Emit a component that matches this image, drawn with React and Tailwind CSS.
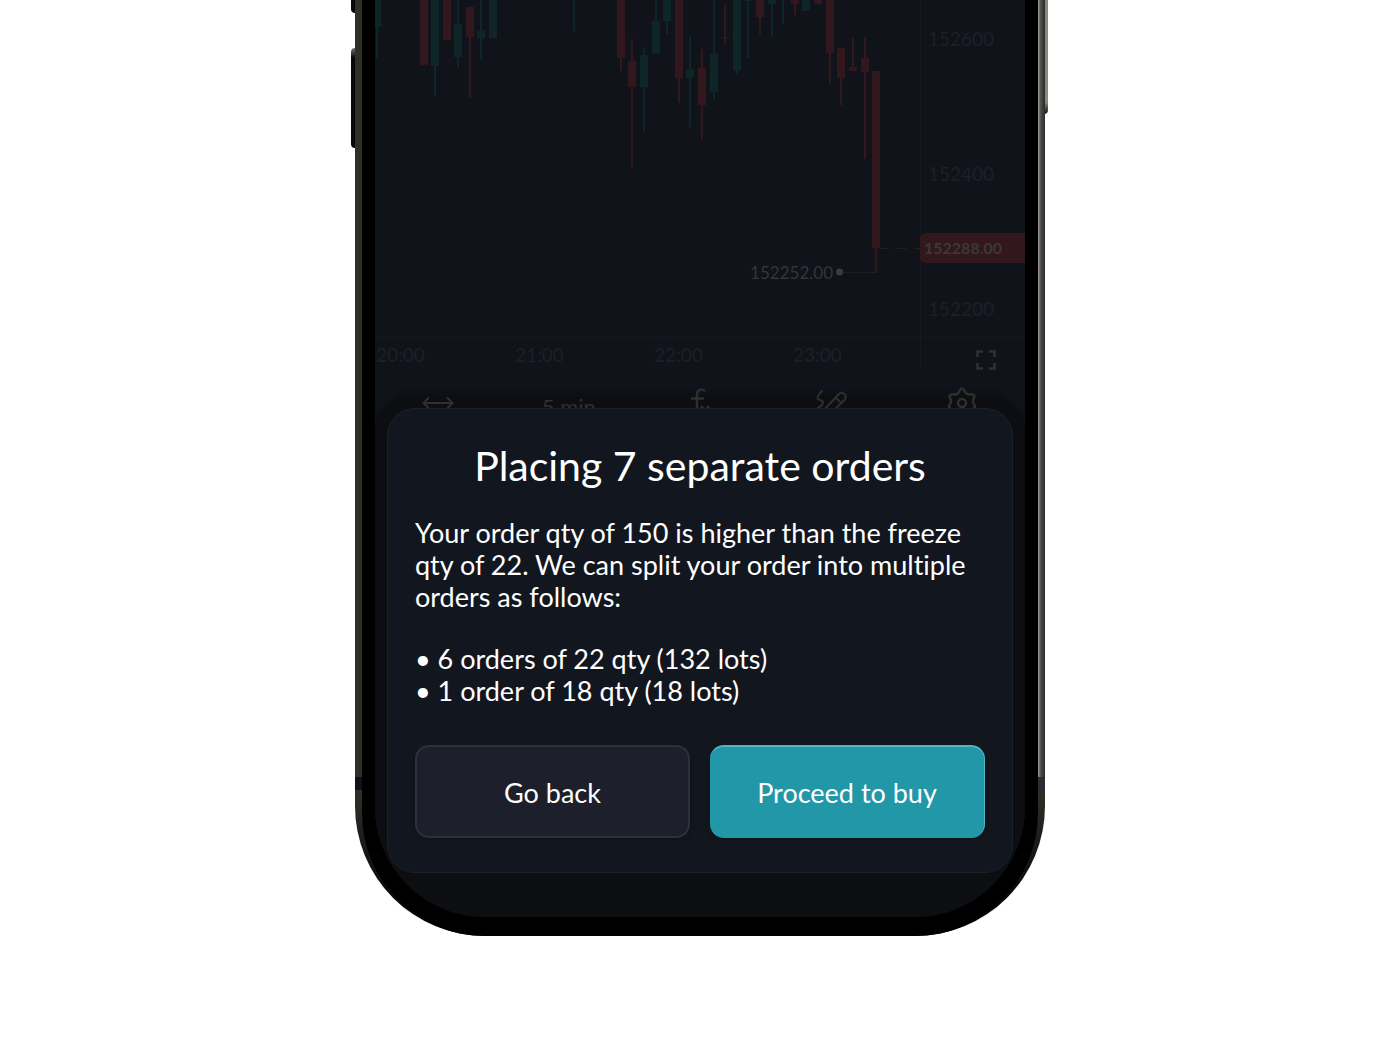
const CANDLES = [
  // [x, open/close top, open/close bottom, high, low, up]
  [2, 0, 27, 0, 59, true],
  [49, 0, 65, 0, 65, false],
  [60, 0, 66, 0, 96, true],
  [72, 0, 40, 0, 40, false],
  [83, 24, 57, 0, 68, true],
  [95, 7, 37, 7, 98, false],
  [106, 31, 38, 0, 60, true],
  [118, 0, 38, 0, 38, true],
  [199, 0, 0, 0, 31, true],
  [246, 0, 58, 0, 71, false],
  [257, 61, 87, 39, 167, false],
  [269, 55, 87, 47, 132, true],
  [281, 21, 54, 0, 54, true],
  [292, 0, 21, 0, 34, true],
  [304, 0, 78, 0, 103, false],
  [315, 69, 78, 37, 127, true],
  [327, 68, 105, 49, 139, false],
  [339, 54, 92, 0, 100, true],
  [350, 37, 38, 5, 44, false],
  [362, 0, 71, 0, 75, true],
  [373, 0, 1, 0, 58, true],
  [385, 0, 17, 0, 34, false],
  [397, 0, 4, 0, 37, true],
  [408, 0, 0, 0, 24, true],
  [420, 0, 4, 0, 15, false],
  [431, 0, 11, 0, 11, true],
  [443, 0, 4, 0, 4, false],
  [455, 0, 53, 0, 84, false],
  [466, 48, 78, 48, 105, false],
  [478, 67, 71, 38, 71, false],
  [490, 58, 72, 37, 159, false],
  [501, 71, 248, 71, 273, false],
];

const PRICES = ['152600', '152400', '152200'];
const TIMES = ['20:00', '21:00', '22:00', '23:00'];

function Chart() {
  return (
    <svg width="545" height="337" viewBox="0 0 545 337" className="block shrink-0" aria-label="Price chart">
      {CANDLES.map(([x, top, bottom, high, low, up]) => (
        <g key={x} fill={up ? '#0f2628' : '#32171d'}>
          <rect x={x - 1} y={high} width="2" height={low - high} />
          <rect x={x - 4} y={top} width="8" height={bottom - top} />
        </g>
      ))}
      <path d="M505 248.500H545" stroke="#2a1c1d" strokeDasharray="9 8" />
      <path d="M465 272.500H501" stroke="#1b1e25" />
      <circle cx="464.500" cy="272" r="3.500" fill="#3a3c40" />
      <text x="458" y="279" textAnchor="end" fontSize="17" fill="#33363a">152252.00</text>
    </svg>
  );
}

function Toolbar() {
  return (
    <div className="relative z-10 -mx-[3px] flex items-start text-[#2f2f2e]">
      <button aria-label="Range" className="flex flex-1 justify-center pt-[9px]">
        <svg width="32" height="20" viewBox="0 0 32 20" fill="none" stroke="currentColor" strokeWidth="2">
          <path d="M1.500 10H30.500M7 4.500L1.500 10L7 15.500M25 4.500L30.500 10L25 15.500" />
        </svg>
      </button>
      <button className="flex-1 pt-[11px] text-[22px] leading-6">5 min</button>
      <button aria-label="Indicators" className="flex flex-1 justify-center">
        <svg width="24" height="36" viewBox="0 0 24 36" fill="none" stroke="currentColor" strokeWidth="2.500">
          <path d="M17 7C13 4 9 6 9 11V29M3 14.500H16M13 22L21 31M21 22L13 31" />
        </svg>
      </button>
      <button aria-label="Draw" className="flex flex-1 justify-center pt-1">
        <svg width="34" height="34" viewBox="0 0 34 34" fill="none" stroke="currentColor" strokeWidth="2">
          <path d="M8.500 2.500Q3 8 3.500 10.500C4 12.500 9 11.500 9 14.500Q8.500 18 3.500 20" />
          <path d="M9 23L24.500 6.500Q27.500 3.500 30.500 6Q33 9 30.500 12L14 28L8 29ZM21.500 9.500L27.500 15" />
        </svg>
      </button>
      <button aria-label="Settings" className="flex flex-1 justify-center">
        <svg width="30" height="36" viewBox="0 0 30 36" fill="none" stroke="currentColor" strokeWidth="2.500" strokeLinejoin="round">
          <path d="M15 4.500Q17 5 18 7.500Q19.500 11 22.500 10.500Q27.500 9.500 27.500 13Q25.500 16 26 18Q26.500 20 28 22Q28.500 25 25 25Q23 26 23 29Q22 32.500 19 31Q15 28.500 11 31Q8 32.500 7 29Q7 26 5 25Q1.500 25 2 22Q3.500 20 4 18Q4.500 16 2.500 13Q2.500 9.500 7.500 10.500Q10.500 11 12 7.500Q13 5 15 4.500Z" />
          <circle cx="15" cy="19" r="4" />
        </svg>
      </button>
    </div>
  );
}

function OrderDialog() {
  return (
    <div
      role="dialog"
      aria-labelledby="dialog-title"
      className="absolute inset-x-3 bottom-11 z-20 rounded-[28px] border border-[#1b222d] bg-[#12171f] px-[27px] py-[34px] text-white [font-variant-ligatures:none]"
    >
      <h1 id="dialog-title" className="text-center text-[41px] leading-[46px]">
        Placing 7 separate orders
      </h1>
      <p className="mt-7 text-[27px] leading-8">
        Your order qty of 150 is higher than the freeze qty of 22. We can split your order into multiple orders as follows:
      </p>
      <ul className="mt-[30px] text-[27px] leading-8">
        <li>• 6 orders of 22 qty (132 lots)</li>
        <li>• 1 order of 18 qty (18 lots)</li>
      </ul>
      <div className="mt-[38px] grid grid-cols-2 gap-5 text-[27px]">
        <button className="h-[93px] rounded-[14px] border-2 border-[#2d3036] bg-[#1d202a] pt-1 shadow-md">Go back</button>
        <button className="h-[93px] rounded-[14px] border-t-2 border-r border-[#50b5c5] bg-[#2297a8] pt-[2px] shadow-md">
          Proceed to buy
        </button>
      </div>
    </div>
  );
}

export default function App() {
  return (
    <main className="flex min-h-screen items-start justify-center bg-white font-['Lato',sans-serif]">
      <div className="relative w-full max-w-[690px]">
        {/* side keys */}
        <div className="absolute top-0 -left-1 h-[13px] w-[5px] rounded-bl bg-[#080808]" />
        <div className="absolute top-12 -left-1 h-[100px] w-[5px] rounded-l bg-linear-to-b from-[#777777] to-[#080808] to-10%" />
        <div className="absolute top-0 -right-[3px] h-[114px] w-1 rounded-br bg-linear-to-b from-[#8b8681] from-90% to-[#1c1416]" />

        <div className="relative rounded-b-[130px] bg-linear-to-b from-[#2f2e29] from-85% to-[#0c0a0b] to-95% px-[7px]">
          {/* metal edge and antenna bands */}
          <div className="absolute top-0 right-0 h-[778px] w-[7px] bg-linear-to-r from-[#a09f9b] via-[#4b4d4a] via-40% to-[#2b2c28]" />
          <div className="absolute top-[777px] left-0 h-[13px] w-[7px] bg-[#101116]" />
          <div className="absolute top-[777px] right-0 h-[13px] w-[7px] bg-[#2a2d31]" />

          <div className="relative rounded-b-[123px] bg-black px-[13px] pb-[19px]">
            <div className="relative h-[917px] overflow-hidden rounded-b-[110px] bg-[#10131a]">
              <div className="flex border-b border-[#161920]">
                <Chart />
                <div className="relative flex flex-1 flex-col gap-[111px] border-l border-[#161920] pt-[27px] pl-[7px] text-[19px] leading-6 text-[#1d2027]">
                  {PRICES.map((price) => (
                    <span key={price}>{price}</span>
                  ))}
                  <p className="absolute right-0 top-[233px] -left-px rounded-l-md bg-[#32171d] pl-1 text-[16px] leading-[30px] font-bold text-[#3b3937]">
                    152288.00
                  </p>
                </div>
              </div>
              <div className="flex h-[46px] items-start text-[19px] leading-6 text-[#1d2027]">
                <div className="flex w-[545px] pt-[5px] pl-px">
                  {TIMES.map((time) => (
                    <span key={time} className="w-[139px] shrink-0">
                      {time}
                    </span>
                  ))}
                </div>
                <div className="flex h-[31px] flex-1 border-l border-[#161920] pt-3 pl-[55px]">
                  <button aria-label="Full screen" className="size-5 text-[#303236]">
                    <svg viewBox="0 0 20 20" fill="none" stroke="currentColor" strokeWidth="2.500">
                      <path d="M1.500 7V1.500H7M13 1.500H18.500V7M18.500 13V18.500H13M7 18.500H1.500V13" />
                    </svg>
                  </button>
                </div>
              </div>
              {/* shade behind the dialog, below the toolbar icons */}
              <div className="absolute inset-x-0 top-[396px] -bottom-5 rounded-[40px] bg-[#0d0e11] shadow-[0_0_6px_2px_#0d0e11]" />
              <Toolbar />
              <OrderDialog />
            </div>
          </div>
        </div>
      </div>
    </main>
  );
}
